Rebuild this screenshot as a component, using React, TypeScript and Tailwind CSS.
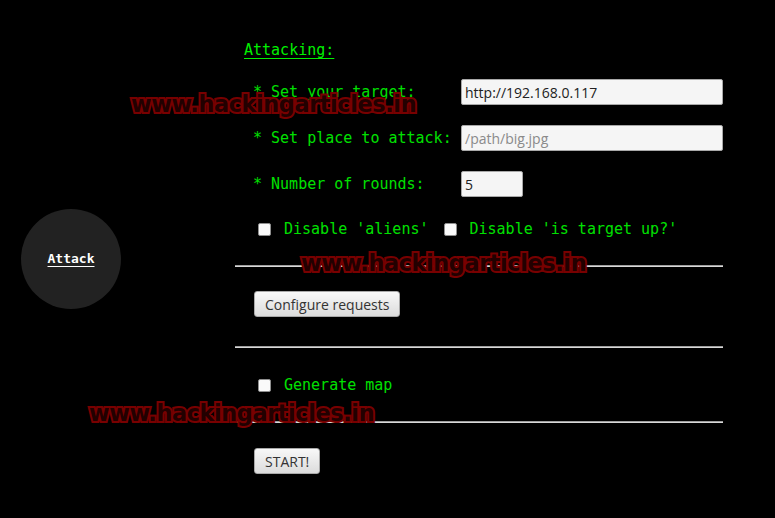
import React from 'react';

const mono = "font-['DejaVu_Sans_Mono',monospace]";
const sans = "font-['Open_Sans',sans-serif]";

function Box() {
  return <span className="inline-block w-[13px] h-[13px] shrink-0 rounded-[2px] border border-[#8f8f8f] bg-[#fafafa]" />;
}

function Field({ label, value, placeholder, width }: { label: string; value?: string; placeholder?: string; width: string }) {
  return (
    <div className="flex items-center h-[26px] pl-[18px]">
      <span className="w-[208px] shrink-0 whitespace-pre">{label}</span>
      <div className={`${width} h-[26px] flex items-center px-[3px] rounded-[2px] border border-[#a8a8a8] bg-[#f5f5f5] ${sans} text-[14px]`}>
        {value ? <span className="text-[#222]">{value}</span> : <span className="text-[#8a8a8a]">{placeholder}</span>}
      </div>
    </div>
  );
}

function Btn({ children }: { children: React.ReactNode }) {
  return (
    <button className={`h-[26px] px-[10px] rounded-[3px] border border-[#a9a9a9] bg-gradient-to-b from-[#f8f8f8] to-[#dcdcdc] text-[#333] text-[14px] ${sans}`}>
      {children}
    </button>
  );
}

function Rule() {
  return <div className="h-[2px] border-t border-[#9e9e9e] bg-[#d8d8d8]" />;
}

const mark =
  "absolute font-['DejaVu_Sans',sans-serif] font-bold text-[22.3px] leading-none tracking-[-0.35px] text-[#220000] [-webkit-text-stroke:4px_#780000] [paint-order:stroke_fill] whitespace-nowrap pointer-events-none";

export default function App() {
  return (
    <div className="relative w-full h-[518px] bg-black flex overflow-hidden">
      {/* side menu */}
      <div className="w-[235px] shrink-0 flex items-center pl-[21px]">
        <div className="w-[100px] h-[100px] rounded-full bg-[#222] flex items-center justify-center">
          <span className={`${mono} text-[13px] font-bold text-white underline underline-offset-[3px]`}>Attack</span>
        </div>
      </div>

      {/* form */}
      <div className={`w-[488px] flex flex-col pt-[40px] ${mono} text-[15px] text-[#00e000]`}>
        <div className="pl-[9px] leading-[20px] underline underline-offset-[3px] text-[#00f000]">Attacking:</div>

        <div className="mt-[19px] flex flex-col gap-[20px]">
          <Field label="* Set your target:" value="http://192.168.0.117" width="w-[262px]" />
          <Field label="* Set place to attack:" placeholder="/path/big.jpg" width="w-[262px]" />
          <Field label="* Number of rounds:" value="5" width="w-[62px]" />
        </div>

        <div className="mt-[19px] h-[26px] flex items-center pl-[23px]">
          <Box />
          <span className="ml-[13px]">Disable 'aliens'</span>
          <span className="ml-[15px] flex items-center">
            <Box />
            <span className="ml-[13px]">Disable 'is target up?'</span>
          </span>
        </div>

        <div className="mt-[23px]"><Rule /></div>

        <div className="mt-[24px] pl-[19px]"><Btn>Configure requests</Btn></div>

        <div className="mt-[29px]"><Rule /></div>

        <div className="mt-[24px] h-[26px] flex items-center pl-[23px]">
          <Box />
          <span className="ml-[13px]">Generate map</span>
        </div>

        <div className="mt-[23px]"><Rule /></div>

        <div className="mt-[25px] pl-[19px]"><Btn>START!</Btn></div>
      </div>

      {/* watermarks */}
      <span className={`${mark} left-[131px] top-[93px]`}>www.hackingarticles.in</span>
      <span className={`${mark} left-[301px] top-[252px]`}>www.hackingarticles.in</span>
      <span className={`${mark} left-[89px] top-[402px]`}>www.hackingarticles.in</span>
    </div>
  );
}
